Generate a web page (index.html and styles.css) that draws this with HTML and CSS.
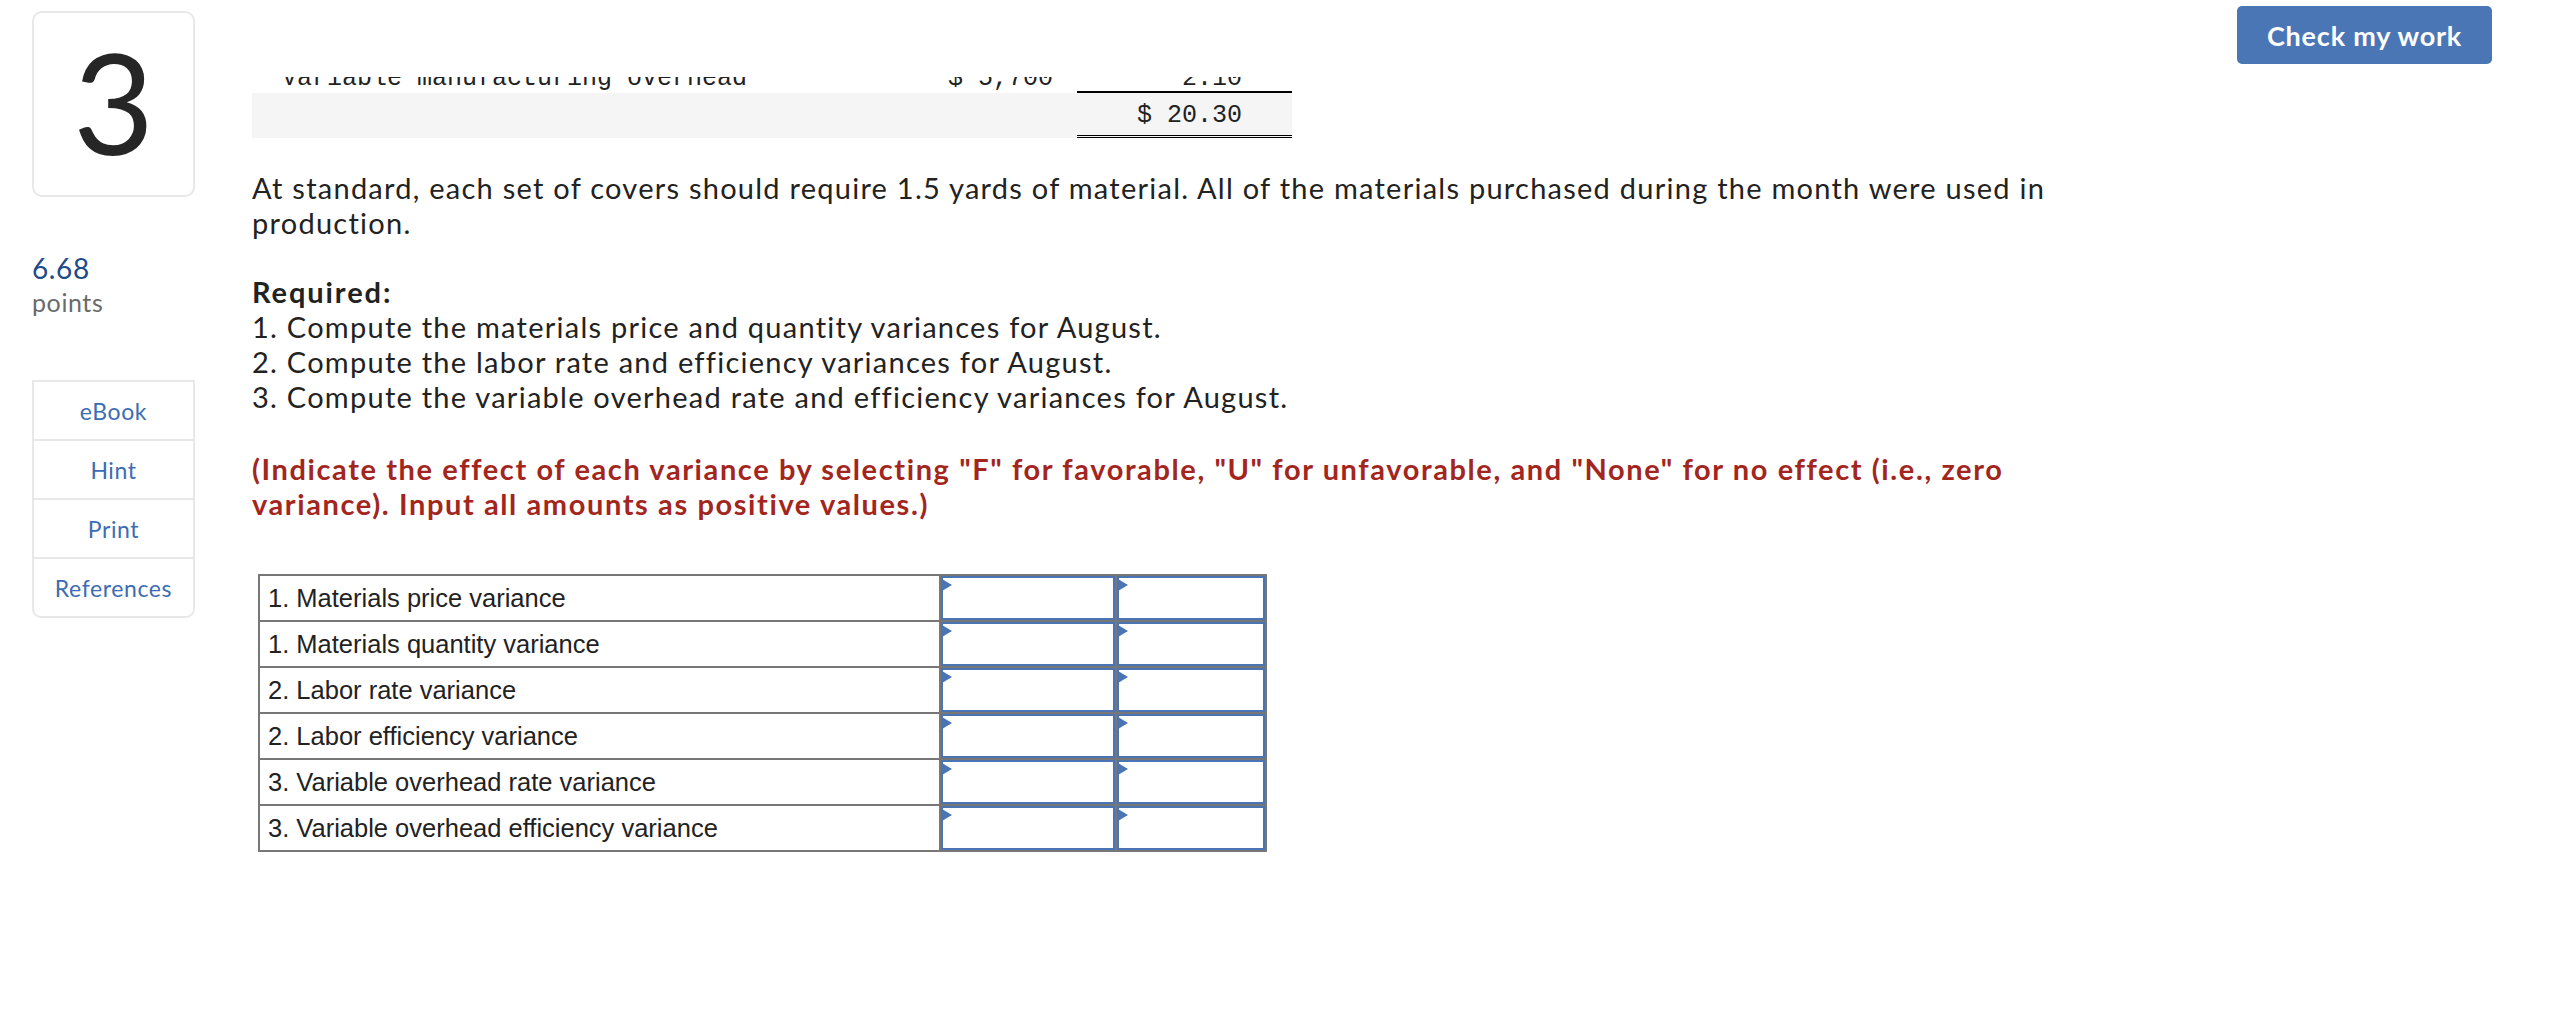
FILE: index.html
```html
<!DOCTYPE html>
<html lang="en">
<head>
<meta charset="utf-8">
<title>Question 3</title>
<link rel="stylesheet" href="styles.css">
</head>
<body>
<div class="page">
  <aside class="side">
    <div class="qnum">3</div>
    <div class="pts">
      <div class="pts-val">6.68</div>
      <div class="pts-lbl">points</div>
    </div>
    <nav class="tools">
      <a class="tool">eBook</a>
      <a class="tool">Hint</a>
      <a class="tool">Print</a>
      <a class="tool">References</a>
    </nav>
  </aside>

  <main class="main">
    <div class="viewport">
      <div class="inner">
        <div class="mtable">
          <div class="mrow">
            <div class="mc lbl">Variable manufacturing overhead</div>
            <div class="mc amt">$ 5,700</div>
            <div class="mc val">2.10</div>
          </div>
          <div class="mrow total">
            <div class="mc lbl"></div>
            <div class="mc amt"></div>
            <div class="mc val">$ 20.30</div>
          </div>
        </div>

        <p class="para">At standard, each set of covers should require 1.5 yards of material. All of the materials purchased during the month were used in production.</p>

        <p class="para req"><b>Required:</b><br>1. Compute the materials price and quantity variances for August.<br>2. Compute the labor rate and efficiency variances for August.<br>3. Compute the variable overhead rate and efficiency variances for August.</p>

        <p class="para note">(Indicate the effect of each variance by selecting "F" for favorable, "U" for unfavorable, and "None" for no effect (i.e., zero variance). Input all amounts as positive values.)</p>

        <table class="answers">
          <tr><td class="alabel">1. Materials price variance</td><td class="acell"><span class="inp"></span></td><td class="acell"><span class="inp"></span></td></tr>
          <tr><td class="alabel">1. Materials quantity variance</td><td class="acell"><span class="inp"></span></td><td class="acell"><span class="inp"></span></td></tr>
          <tr><td class="alabel">2. Labor rate variance</td><td class="acell"><span class="inp"></span></td><td class="acell"><span class="inp"></span></td></tr>
          <tr><td class="alabel">2. Labor efficiency variance</td><td class="acell"><span class="inp"></span></td><td class="acell"><span class="inp"></span></td></tr>
          <tr><td class="alabel">3. Variable overhead rate variance</td><td class="acell"><span class="inp"></span></td><td class="acell"><span class="inp"></span></td></tr>
          <tr><td class="alabel">3. Variable overhead efficiency variance</td><td class="acell"><span class="inp"></span></td><td class="acell"><span class="inp"></span></td></tr>
        </table>
      </div>
    </div>
  </main>

  <div class="actions">
    <button class="check">Check my work</button>
  </div>
</div>
</body>
</html>
```

FILE: styles.css
```css
html, body {
  margin: 0;
  padding: 0;
  background: #fff;
}

body {
  font-family: Lato, "Noto Sans", sans-serif;
  color: #222;
}

.page {
  display: flex;
  align-items: flex-start;
  height: 1018px;
  overflow: hidden;
}

/* ---------- left sidebar ---------- */
.side {
  flex: none;
  width: 163px;
  margin-left: 32px;
  padding-top: 11px;
}

.qnum {
  box-sizing: border-box;
  height: 186px;
  border: 2px solid #e8e8e8;
  border-radius: 10px;
  display: flex;
  align-items: center;
  justify-content: center;
  font-size: 140px;
  line-height: 1;
  color: #262626;
  padding-bottom: 6px;
}

.pts {
  margin-top: 54px;
}

.pts-val {
  font-size: 28px;
  line-height: 34px;
  color: #1f4a8a;
  letter-spacing: 0.6px;
}

.pts-lbl {
  font-size: 25px;
  line-height: 34px;
  color: #6a6a6a;
  letter-spacing: 0.6px;
}

.tools {
  margin-top: 61px;
  border: 2px solid #e8e8e8;
  border-radius: 0 0 9px 9px;
  display: flex;
  flex-direction: column;
}

.tool {
  height: 57px;
  display: flex;
  align-items: center;
  justify-content: center;
  font-size: 23px;
  letter-spacing: 0.6px;
  color: #3c6db3;
  border-bottom: 2px solid #e8e8e8;
}

.tool:last-child {
  border-bottom: 0;
}

/* ---------- main content ---------- */
.main {
  flex: none;
  width: 1830px;
  margin-left: 57px;
  padding-top: 77px;
}

.viewport {
  height: 941px;
  overflow: hidden;
}

.inner {
  margin-top: -32px;
}

.mtable {
  width: 1040px;
  font-family: "Liberation Mono", "DejaVu Sans Mono", monospace;
  font-size: 25px;
  color: #222;
}

.mrow {
  display: grid;
  grid-template-columns: 1fr 200px 215px;
}

.mrow .mc {
  box-sizing: border-box;
  height: 46px;
  line-height: 20px;
  padding-top: 24px;
  white-space: nowrap;
}

.mc.lbl {
  padding-left: 30px;
}

.mc.amt {
  text-align: right;
  padding-right: 24px;
}

.mc.val {
  text-align: right;
  padding-right: 50px;
}

.mrow.total {
  background: #f5f5f5;
}

.mrow.total .mc {
  height: 47px;
  line-height: 30px;
  padding-top: 8px;
  border-top: 2px solid #fff;
}

.mrow.total .mc.val {
  border-top: 2px solid #000;
  border-bottom: 3px double #000;
}

.para {
  margin: 32px 0 0;
  font-size: 29px;
  line-height: 35px;
  letter-spacing: 1.25px;
  color: #222;
}

.req {
  margin-top: 34px;
}

.req b {
  font-weight: 700;
  letter-spacing: 1.9px;
}

.note {
  margin-top: 37px;
  font-weight: 700;
  letter-spacing: 1.6px;
  color: #a3261e;
}

/* ---------- answer table ---------- */
.answers {
  margin: 53px 0 0 6px;
  border-collapse: collapse;
  font-family: "Liberation Sans", Arial, sans-serif;
  font-size: 25.5px;
  color: #222;
}

.answers td {
  border: 2px solid #777;
  height: 44px;
  padding: 0;
}

.alabel {
  width: 671px;
  padding-left: 8px !important;
  white-space: nowrap;
}

.acell {
  width: 174px;
  position: relative;
}

.acell + .acell {
  width: 148px;
}

.inp {
  position: absolute;
  inset: 0;
  border: 2px solid #4a74b4;
  background: #fff;
}

.inp::before {
  content: "";
  position: absolute;
  left: -1px;
  top: 1px;
  border-left: 10px solid #4a74b4;
  border-top: 6px solid transparent;
  border-bottom: 6px solid transparent;
}

/* ---------- actions ---------- */
.actions {
  flex: none;
  margin-left: auto;
  margin-right: 66px;
  padding-top: 6px;
}

.check {
  width: 255px;
  height: 58px;
  border: 0;
  border-radius: 5px;
  background: #4a76b5;
  color: #fff;
  font-family: Lato, "Noto Sans", sans-serif;
  font-weight: 700;
  font-size: 27px;
  letter-spacing: 0.8px;
  padding: 0;
}
```
